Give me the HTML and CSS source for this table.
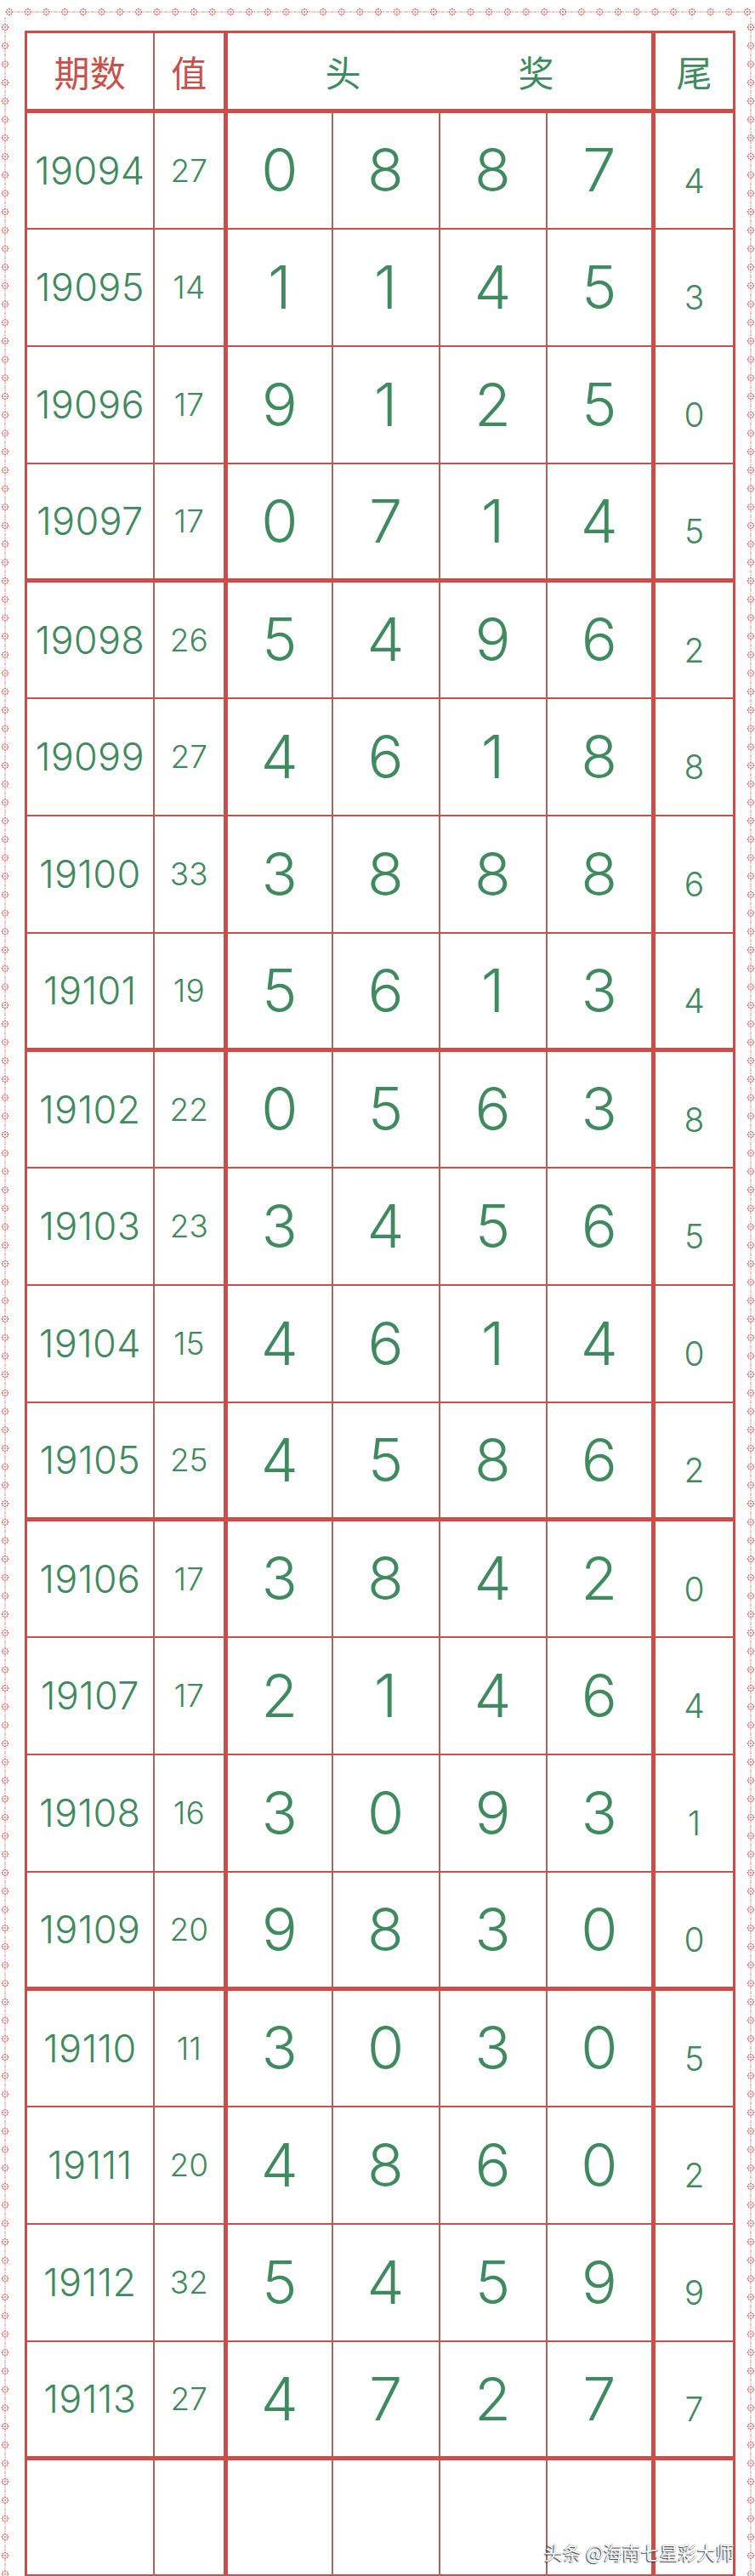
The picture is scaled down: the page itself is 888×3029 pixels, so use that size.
FILE: index.html
```html
<!DOCTYPE html>
<html lang="zh">
<head>
<meta charset="utf-8">
<title>七星彩 头奖走势</title>
<link rel="stylesheet" href="styles.css">
</head>
<body>
<div class="page">
  <svg class="strip-top" width="888" height="12" viewBox="0 0 888 12">
    <defs>
      <pattern id="ph" x="0.15" y="0" width="21.7" height="12" patternUnits="userSpaceOnUse">
        <line x1="0" y1="6" x2="5.6" y2="6" class="dash"/>
        <line x1="16.1" y1="6" x2="21.7" y2="6" class="dash"/>
        <g class="flower" transform="translate(10.85 6)">
          <circle r="1" cx="0" cy="-3.4"/><circle r="1" cx="0" cy="3.4"/>
          <circle r="1" cx="-3.4" cy="0"/><circle r="1" cx="3.4" cy="0"/>
          <circle r="0.9" cx="-2.4" cy="-2.4"/><circle r="0.9" cx="2.4" cy="-2.4"/>
          <circle r="0.9" cx="-2.4" cy="2.4"/><circle r="0.9" cx="2.4" cy="2.4"/>
          <circle r="0.9" cx="0" cy="0"/>
        </g>
      </pattern>
    </defs>
    <rect x="6" y="0" width="882" height="12" fill="url(#ph)"/>
  </svg>
  <div class="frame-row">
    <svg class="strip-side" width="12" height="3010" viewBox="0 0 12 3010">
      <defs>
        <pattern id="pv" x="0" y="1.15" width="12" height="21.7" patternUnits="userSpaceOnUse">
          <line x1="6" y1="0" x2="6" y2="5.6" class="dash"/>
          <line x1="6" y1="16.1" x2="6" y2="21.7" class="dash"/>
          <g class="flower" transform="translate(6 10.85)">
            <circle r="1" cx="0" cy="-3.4"/><circle r="1" cx="0" cy="3.4"/>
            <circle r="1" cx="-3.4" cy="0"/><circle r="1" cx="3.4" cy="0"/>
            <circle r="0.9" cx="-2.4" cy="-2.4"/><circle r="0.9" cx="2.4" cy="-2.4"/>
            <circle r="0.9" cx="-2.4" cy="2.4"/><circle r="0.9" cx="2.4" cy="2.4"/>
            <circle r="0.9" cx="0" cy="0"/>
          </g>
        </pattern>
      </defs>
      <rect x="0" y="0" width="12" height="3010" fill="url(#pv)"/>
    </svg>
    <div class="content">
      <table class="grid">
        <colgroup>
          <col class="c-issue"><col class="c-val"><col class="c-d1"><col class="c-d"><col class="c-d"><col class="c-d"><col class="c-tail">
        </colgroup>
        <tr class="head">
          <td class="h-red issue">期数</td>
          <td class="h-red val">值</td>
          <td class="h-green prize" colspan="4"><span class="prize-inner"><span>头</span><span>奖</span></span></td>
          <td class="h-green tail">尾</td>
        </tr>
        <tr><td class="issue">19094</td><td class="val">27</td><td class="big first">0</td><td class="big">8</td><td class="big">8</td><td class="big last">7</td><td class="tail"><span>4</span></td></tr>
        <tr><td class="issue">19095</td><td class="val">14</td><td class="big first">1</td><td class="big">1</td><td class="big">4</td><td class="big last">5</td><td class="tail"><span>3</span></td></tr>
        <tr><td class="issue">19096</td><td class="val">17</td><td class="big first">9</td><td class="big">1</td><td class="big">2</td><td class="big last">5</td><td class="tail"><span>0</span></td></tr>
        <tr class="q"><td class="issue">19097</td><td class="val">17</td><td class="big first">0</td><td class="big">7</td><td class="big">1</td><td class="big last">4</td><td class="tail"><span>5</span></td></tr>
        <tr><td class="issue">19098</td><td class="val">26</td><td class="big first">5</td><td class="big">4</td><td class="big">9</td><td class="big last">6</td><td class="tail"><span>2</span></td></tr>
        <tr><td class="issue">19099</td><td class="val">27</td><td class="big first">4</td><td class="big">6</td><td class="big">1</td><td class="big last">8</td><td class="tail"><span>8</span></td></tr>
        <tr><td class="issue">19100</td><td class="val">33</td><td class="big first">3</td><td class="big">8</td><td class="big">8</td><td class="big last">8</td><td class="tail"><span>6</span></td></tr>
        <tr class="q"><td class="issue">19101</td><td class="val">19</td><td class="big first">5</td><td class="big">6</td><td class="big">1</td><td class="big last">3</td><td class="tail"><span>4</span></td></tr>
        <tr><td class="issue">19102</td><td class="val">22</td><td class="big first">0</td><td class="big">5</td><td class="big">6</td><td class="big last">3</td><td class="tail"><span>8</span></td></tr>
        <tr><td class="issue">19103</td><td class="val">23</td><td class="big first">3</td><td class="big">4</td><td class="big">5</td><td class="big last">6</td><td class="tail"><span>5</span></td></tr>
        <tr><td class="issue">19104</td><td class="val">15</td><td class="big first">4</td><td class="big">6</td><td class="big">1</td><td class="big last">4</td><td class="tail"><span>0</span></td></tr>
        <tr class="q"><td class="issue">19105</td><td class="val">25</td><td class="big first">4</td><td class="big">5</td><td class="big">8</td><td class="big last">6</td><td class="tail"><span>2</span></td></tr>
        <tr><td class="issue">19106</td><td class="val">17</td><td class="big first">3</td><td class="big">8</td><td class="big">4</td><td class="big last">2</td><td class="tail"><span>0</span></td></tr>
        <tr><td class="issue">19107</td><td class="val">17</td><td class="big first">2</td><td class="big">1</td><td class="big">4</td><td class="big last">6</td><td class="tail"><span>4</span></td></tr>
        <tr><td class="issue">19108</td><td class="val">16</td><td class="big first">3</td><td class="big">0</td><td class="big">9</td><td class="big last">3</td><td class="tail"><span>1</span></td></tr>
        <tr class="q"><td class="issue">19109</td><td class="val">20</td><td class="big first">9</td><td class="big">8</td><td class="big">3</td><td class="big last">0</td><td class="tail"><span>0</span></td></tr>
        <tr><td class="issue">19110</td><td class="val">11</td><td class="big first">3</td><td class="big">0</td><td class="big">3</td><td class="big last">0</td><td class="tail"><span>5</span></td></tr>
        <tr><td class="issue">19111</td><td class="val">20</td><td class="big first">4</td><td class="big">8</td><td class="big">6</td><td class="big last">0</td><td class="tail"><span>2</span></td></tr>
        <tr><td class="issue">19112</td><td class="val">32</td><td class="big first">5</td><td class="big">4</td><td class="big">5</td><td class="big last">9</td><td class="tail"><span>9</span></td></tr>
        <tr class="q"><td class="issue">19113</td><td class="val">27</td><td class="big first">4</td><td class="big">7</td><td class="big">2</td><td class="big last">7</td><td class="tail"><span>7</span></td></tr>
        <tr class="empty"><td class="issue"></td><td class="val"></td><td class="big first"></td><td class="big"></td><td class="big"></td><td class="big last"></td><td class="tail"></td></tr>
      </table>
    </div>
    <svg class="strip-side" width="12" height="3010" viewBox="0 0 12 3010">
      <rect x="0" y="0" width="12" height="3010" fill="url(#pv)"/>
    </svg>
  </div>
  <div class="watermark">头条 @海南七星彩大师</div>
</div>
</body>
</html>
```

FILE: styles.css
```css
* { box-sizing: border-box; }
html, body { margin: 0; padding: 0; background: #ffffff; }

.page {
  position: relative;
  width: 888px;
  height: 3029px;
  overflow: hidden;
  padding-top: 8px;
  background: #ffffff;
}

.strip-top { display: block; width: 888px; height: 12px; }
.dash { stroke: #d48a84; stroke-width: 1; stroke-dasharray: 2 1.3; }
.flower circle { fill: #c9605a; }

.frame-row { display: flex; }
.strip-side { display: block; flex: none; width: 12px; height: 3010px; }

.content {
  flex: none;
  width: 865px;
  padding: 16px 0 0 17px;
}

.grid {
  border-collapse: collapse;
  table-layout: fixed;
  width: 836px;
  font-family: Inter, "Liberation Sans", sans-serif;
  font-weight: 350;
  color: #3f8a5e;
  border: 3px solid #c9504a;
}

.c-issue { width: 150px; }
.c-val { width: 85px; }
.c-d1 { width: 125px; }
.c-d { width: 126px; }
.c-tail { width: 95px; }

.grid td {
  padding: 0;
  text-align: center;
  vertical-align: middle;
  border-top: 2px solid #c9504a;
  border-bottom: 2px solid #c9504a;
  border-left: 2px solid #a7655f;
  border-right: 2px solid #a7655f;
  line-height: 1;
}

.grid tr { height: 138px; }
.grid tr.head { height: 93px; }

.grid .head td {
  border-bottom: 5px solid #c9504a;
  font-family: "Noto Sans CJK SC", "Noto Sans CJK JP", sans-serif;
  font-size: 42px;
  font-weight: 400;
}
.grid .head td.h-red { color: #c9504a; }
.grid .head td.h-green { color: #3f8a5e; }

.prize-inner {
  display: flex;
  justify-content: center;
  gap: 185px;
}

.grid tr.q td { border-bottom: 5px solid #c9504a; }

.grid td.val { border-right: 5px solid #c9504a; }
.grid td.prize,
.grid td.first { border-left: 5px solid #c9504a; }
.grid td.last,
.grid td.prize { border-right: 5px solid #c9504a; }
.grid td.tail { border-left: 5px solid #c9504a; border-right: 3px solid #c9504a; }
.grid td.issue { border-left: 3px solid #c9504a; }
.grid tr.head td { border-top: 3px solid #c9504a; }

.issue { font-size: 45px; letter-spacing: 0.3px; }
.val { font-size: 37px; }
.big { font-size: 70px; }
.tail { font-size: 39px; }
.grid td.tail span { display: inline-block; padding-top: 24px; }
.grid .head td.tail { font-size: 42px; }

.watermark {
  position: absolute;
  left: 640px;
  top: 2985px;
  font-family: "Noto Sans CJK SC", sans-serif;
  font-size: 22px;
  line-height: 30px;
  color: #ffffff;
  white-space: nowrap;
  text-shadow: -1px 1px 1px rgba(0, 0, 0, 0.75), 0 0 1px rgba(0, 0, 0, 0.6);
}
```
